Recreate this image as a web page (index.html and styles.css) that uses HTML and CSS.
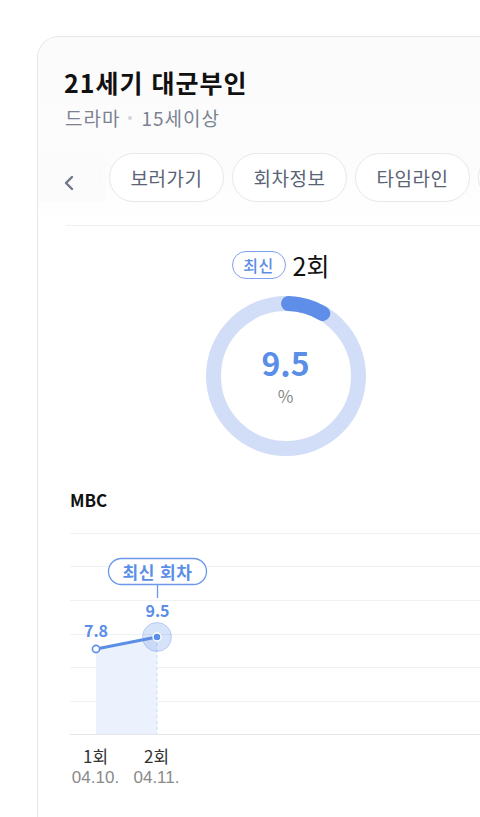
FILE: index.html
```html
<!DOCTYPE html>
<html lang="ko">
<head>
<meta charset="utf-8">
<link rel="stylesheet" href="styles.css">
</head>
<body>
<div class="card">
  <header class="head">
    <h1 class="title">21세기 대군부인</h1>
    <p class="meta">드라마<span class="dot"></span>15세이상</p>
    <nav class="tabs">
      <div class="chips">
        <span class="chip"></span>
        <span class="chip">보러가기</span>
        <span class="chip">회차정보</span>
        <span class="chip">타임라인</span>
        <span class="chip"></span>
      </div>
      <div class="fade">
        <svg width="12" height="16" viewBox="0 0 12 16"><path d="M9 2 L3 8 L9 14" fill="none" stroke="#6d7688" stroke-width="2.4" stroke-linecap="round" stroke-linejoin="round"/></svg>
      </div>
    </nav>
  </header>
  <div class="divider"></div>
  <section class="rating">
    <div class="ep"><span class="badge">최신</span><span class="epnum">2회</span></div>
    <div class="donut">
      <svg width="160" height="160" viewBox="0 0 160 160">
        <circle cx="80" cy="80" r="72.5" fill="none" stroke="#d2ddf7" stroke-width="15"/>
        <circle cx="80" cy="80" r="72.5" fill="none" stroke="#5e8ee8" stroke-width="15" stroke-linecap="round" stroke-dasharray="36 500" transform="rotate(-88 80 80)"/>
      </svg>
      <div class="val"><span class="num">9.5</span><span class="pct">%</span></div>
    </div>
  </section>
  <section class="chart">
    <h2 class="ch">MBC</h2>
    <svg class="plot" width="442" height="216" viewBox="0 0 442 216">
      <g stroke="#f0f1f4" stroke-width="1">
        <line x1="32" y1="13.5" x2="442" y2="13.5"/>
        <line x1="32" y1="46.5" x2="442" y2="46.5"/>
        <line x1="32" y1="80.5" x2="442" y2="80.5"/>
        <line x1="32" y1="114.5" x2="442" y2="114.5"/>
        <line x1="32" y1="147.5" x2="442" y2="147.5"/>
        <line x1="32" y1="181.5" x2="442" y2="181.5"/>
      </g>
      <line x1="32" y1="214.5" x2="442" y2="214.5" stroke="#e3e6eb" stroke-width="1"/>
      <polygon points="58,129 119,117 119,214 58,214" fill="#ecf2fd"/>
      <line x1="119" y1="117" x2="119" y2="214" stroke="#c6d7f6" stroke-width="1" stroke-dasharray="3 3"/>
      <rect x="70.5" y="38.5" width="98" height="26" rx="13" fill="#fff" stroke="#6b98ea" stroke-width="1.3"/>
      <text x="119.5" y="58.5" class="tip">최신 회차</text>
      <line x1="119.5" y1="65" x2="119.5" y2="78" stroke="#6b98ea" stroke-width="1.3"/>
      <line x1="58" y1="129" x2="119" y2="117" stroke="#5b8ee6" stroke-width="3" stroke-linecap="round"/>
      <circle cx="119" cy="117" r="14.5" fill="#5e8ee8" fill-opacity="0.25" stroke="#5e8ee8" stroke-opacity="0.35" stroke-width="1"/>
      <circle cx="58" cy="129" r="3.6" fill="#fff" stroke="#5b8ee6" stroke-width="1.6"/>
      <circle cx="119" cy="117" r="4" fill="#5b8ee6" stroke="#fff" stroke-width="1.4"/>
      <text x="58" y="117" class="pv">7.8</text>
      <text x="119.5" y="97" class="pv">9.5</text>
    </svg>
    <div class="xaxis">
      <div class="tick"><span class="xl">1회</span><span class="xd">04.10.</span></div>
      <div class="tick"><span class="xl">2회</span><span class="xd">04.11.</span></div>
    </div>
  </section>
</div>
</body>
</html>
```

FILE: styles.css
```css
html, body {
  margin: 0;
  padding: 0;
  background: #fff;
  overflow: hidden;
  width: 480px;
  height: 817px;
}
body {
  font-family: "Noto Sans CJK KR", "Noto Sans", sans-serif;
  color: #111;
}
.card {
  margin: 36px 0 0 37px;
  width: 495px;
  height: 800px;
  border: 1px solid #e4e5e8;
  border-right: none;
  border-radius: 22px 0 0 0;
  background: #fff;
  overflow: hidden;
}
.head {
  background: linear-gradient(#fbfbfc, #fcfcfd 70%, #fff);
  padding-top: 27px;
}
.title {
  margin: 0 0 0 26px;
  font-size: 25px;
  font-weight: 700;
  line-height: 36px;
  letter-spacing: 1px;
}
.meta {
  margin: 4px 0 0 27px;
  font-size: 19px;
  line-height: 28px;
  letter-spacing: 1px;
  color: #7b8391;
  display: flex;
  align-items: center;
}
.dot {
  width: 4px;
  height: 4px;
  border-radius: 50%;
  background: #d2d5da;
  margin: 0 9px 0 8px;
}
.tabs {
  position: relative;
  margin-top: 20px;
  height: 73px;
}
.chips {
  display: flex;
  gap: 8px;
  margin-left: -52px;
  padding-top: 1px;
}
.chip {
  flex: none;
  width: 113px;
  height: 47px;
  border: 1px solid #e6e7ea;
  border-radius: 25px;
  background: #fff;
  display: flex;
  align-items: center;
  justify-content: center;
  font-size: 19px;
  letter-spacing: 0.5px;
  color: #596477;
}
.fade {
  position: absolute;
  left: 0;
  top: 0;
  width: 68px;
  height: 50px;
  background: linear-gradient(to right, #fbfbfc 0, #fbfbfc 55px, rgba(251,251,252,0.75) 68px);
  display: flex;
  align-items: center;
  padding-left: 25px;
  box-sizing: border-box;
  padding-top: 12px;
}
.divider {
  height: 1px;
  background: #eeeff1;
  margin-left: 28px;
}
.rating {
  display: flex;
  flex-direction: column;
  align-items: center;
}
.ep {
  display: flex;
  align-items: center;
  gap: 7px;
  margin: 24px 10px 0 0;
  height: 30px;
}
.badge {
  box-sizing: border-box;
  height: 28px;
  width: 54px;
  border: 1px solid #7fa3ee;
  border-radius: 14px;
  font-size: 16px;
  font-weight: 500;
  color: #5b8ee6;
  display: flex;
  align-items: center;
  justify-content: center;
  letter-spacing: 0.5px;
}
.epnum {
  font-size: 25px;
  line-height: 30px;
  color: #111;
}
.donut {
  position: relative;
  width: 160px;
  height: 160px;
  margin-top: 16px;
}
.donut svg {
  display: block;
}
.val {
  position: absolute;
  inset: 0;
  display: flex;
  flex-direction: column;
  align-items: center;
  justify-content: center;
}
.num {
  font-size: 32px;
  font-weight: 700;
  color: #5b8ee6;
  line-height: 32px;
}
.pct {
  font-size: 17px;
  color: #8a8a8a;
  line-height: 20px;
  margin-top: 8px;
}
.chart {
  margin-top: 31px;
}
.ch {
  margin: 0 0 0 32px;
  font-size: 17px;
  font-weight: 700;
  line-height: 26px;
  color: #111;
}
.plot {
  display: block;
  margin-top: 7px;
}
.tip {
  font-size: 17px;
  font-weight: 700;
  fill: #5b8ee6;
  text-anchor: middle;
  letter-spacing: 0.5px;
}
.pv {
  font-size: 16px;
  font-weight: 700;
  fill: #5b8ee6;
  text-anchor: middle;
}
.xaxis {
  display: flex;
  margin: 8px 0 0 27px;
}
.tick {
  width: 61px;
  display: flex;
  flex-direction: column;
  align-items: center;
}
.xl {
  font-size: 17px;
  line-height: 23px;
  color: #333;
}
.xd {
  font-family: "Liberation Sans", "Noto Sans", sans-serif;
  font-size: 17px;
  line-height: 21px;
  color: #8a8a8a;
}
```
